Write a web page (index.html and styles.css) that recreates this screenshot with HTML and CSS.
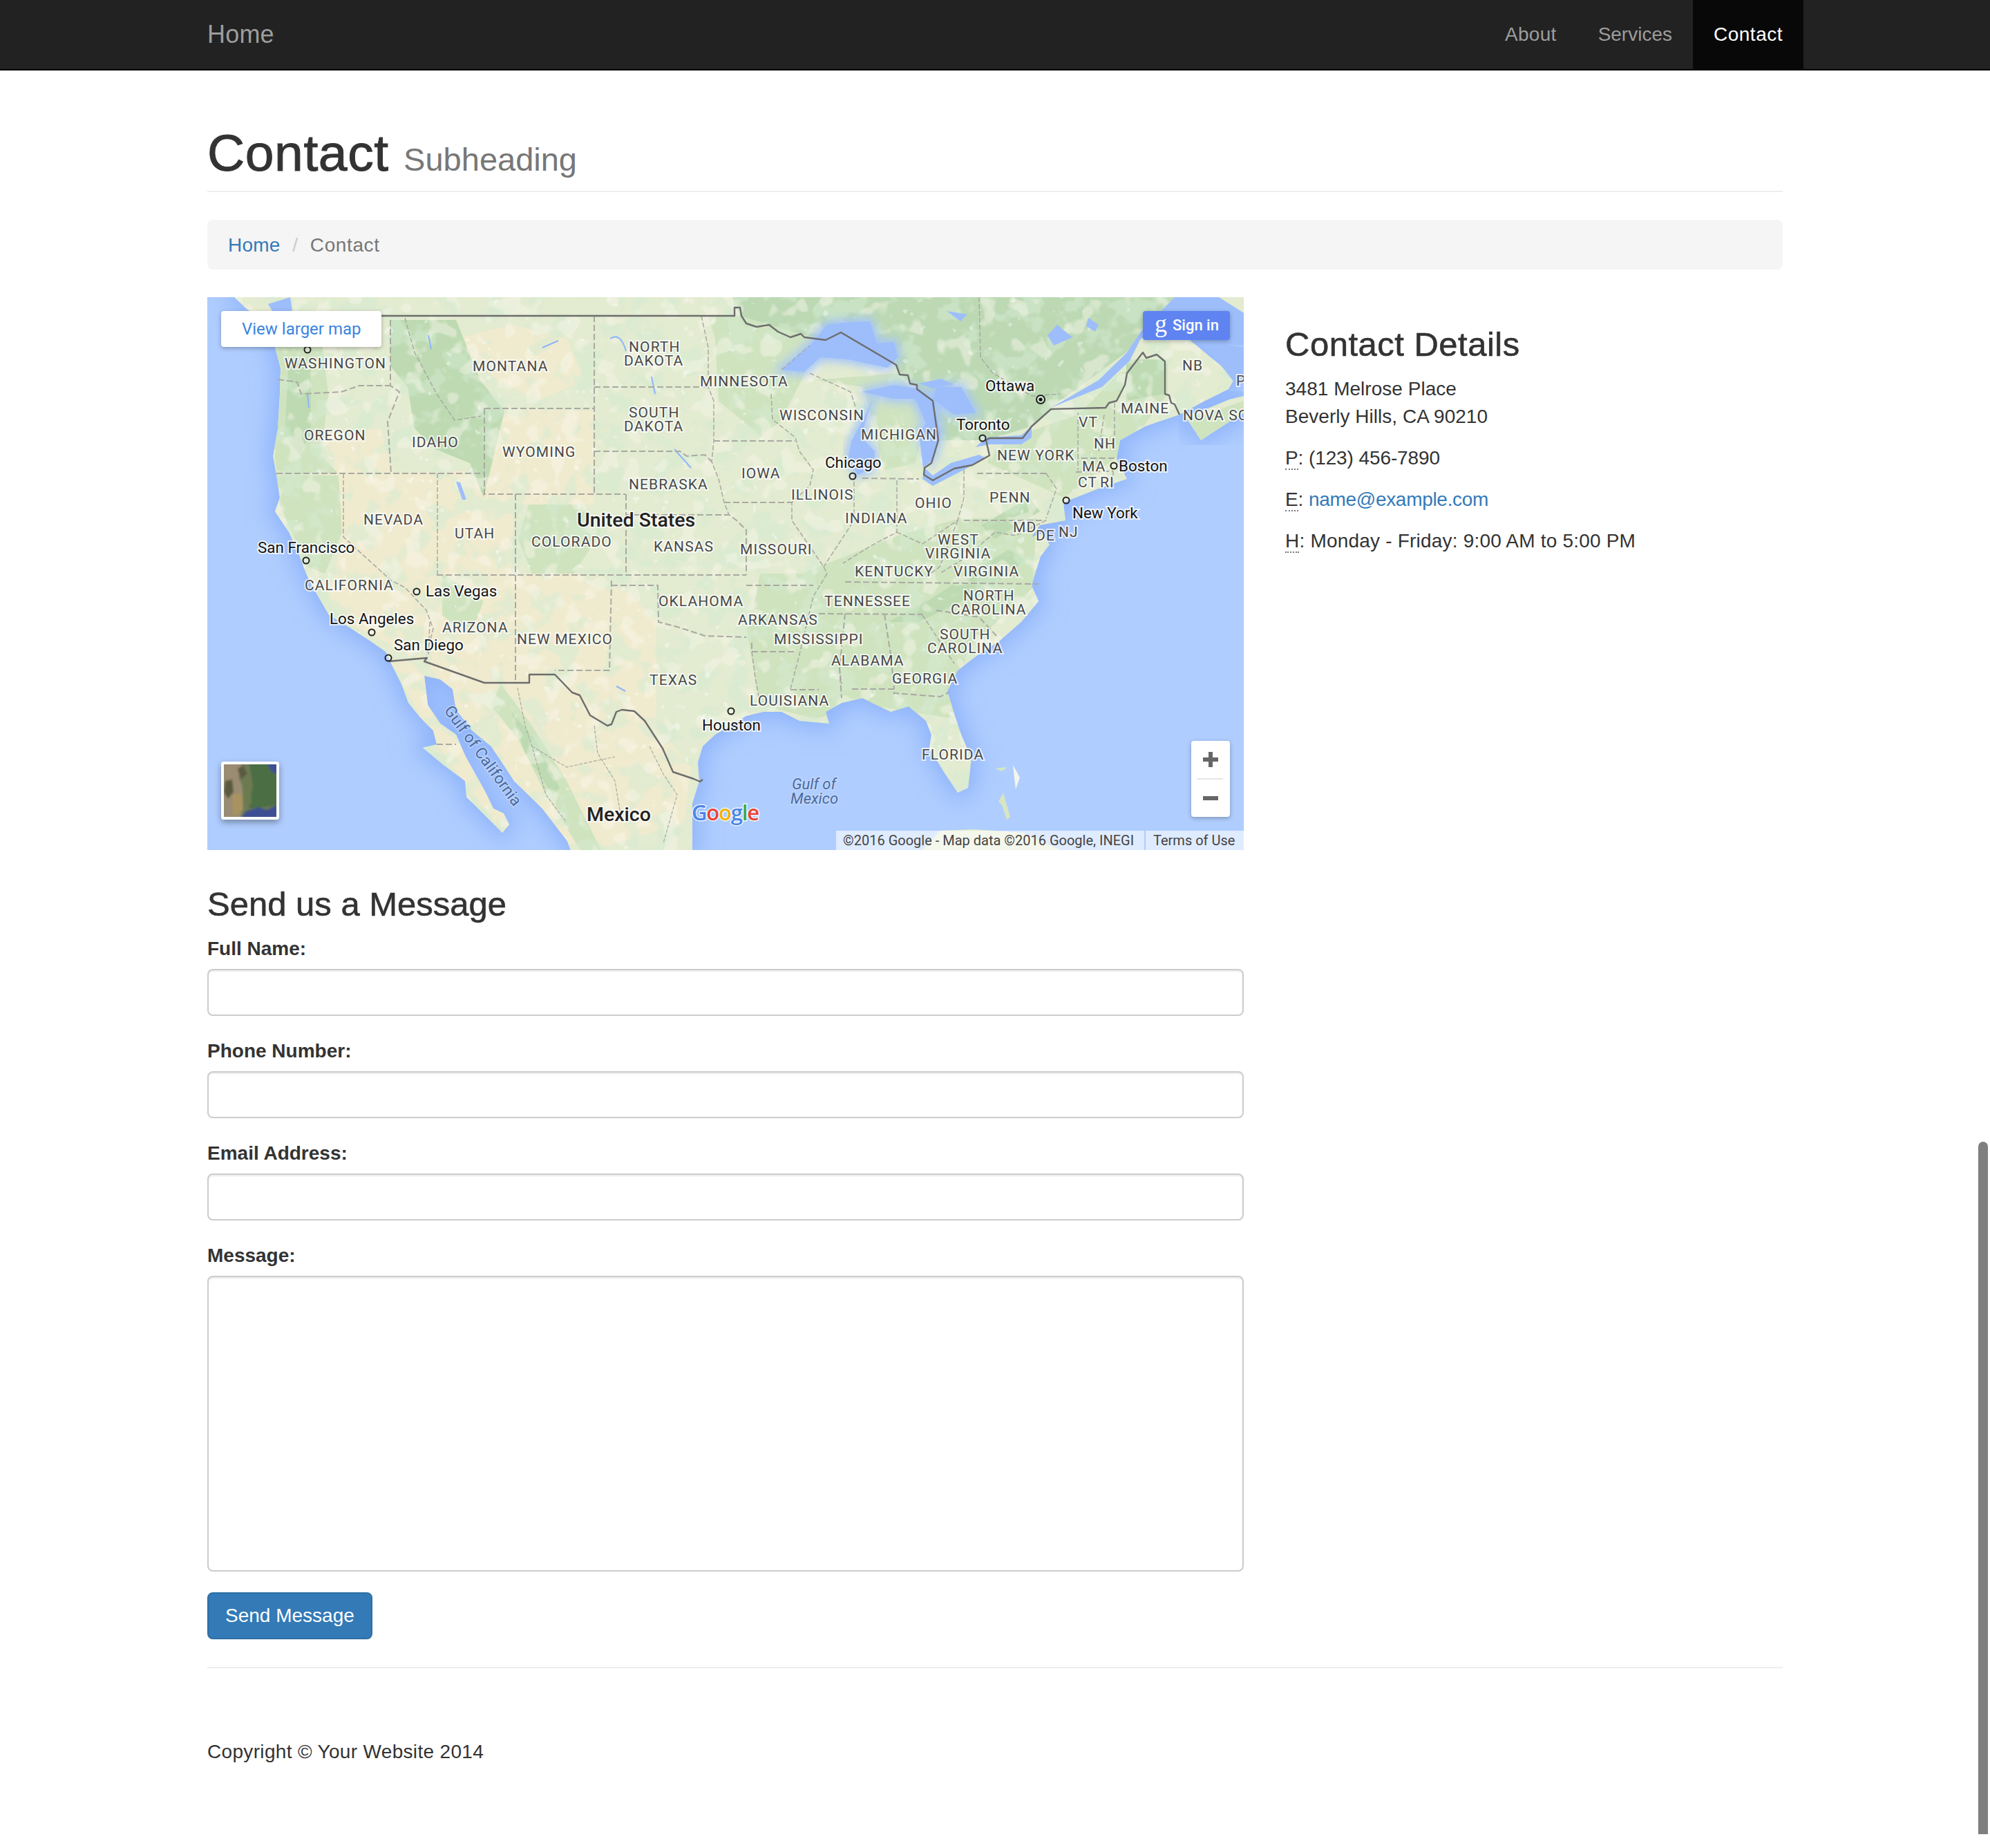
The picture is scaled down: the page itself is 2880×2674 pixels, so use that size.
FILE: index.html
```html
<!DOCTYPE html>
<html lang="en">
<head>
<meta charset="utf-8">
<title>Contact</title>
<link rel="stylesheet" href="styles.css">
</head>
<body>
<nav class="navbar">
  <div class="container navbar-inner">
    <a class="brand" href="#">Home</a>
    <ul class="nav-links">
      <li><a href="#">About</a></li>
      <li><a href="#">Services</a></li>
      <li class="active"><a href="#">Contact</a></li>
    </ul>
  </div>
</nav>

<main class="container">
  <header class="page-header">
    <h1>Contact <small>Subheading</small></h1>
  </header>
  <ol class="breadcrumb">
    <li class="crumb-link"><a href="#">Home</a></li>
    <li class="crumb-active">Contact</li>
  </ol>

  <div class="row">
    <div class="col-main">
      <div class="map">
        <svg class="map-canvas" viewBox="0 0 1500 800" width="1500" height="800" xmlns="http://www.w3.org/2000/svg">
          <defs>
            <filter id="coastBlur" x="-10%" y="-10%" width="120%" height="120%"><feGaussianBlur stdDeviation="16"/></filter>
            <filter id="lakeBlur" x="-20%" y="-20%" width="140%" height="140%"><feGaussianBlur stdDeviation="7"/></filter>
            <filter id="mottleGreen" x="0" y="0" width="100%" height="100%">
              <feTurbulence type="fractalNoise" baseFrequency="0.028" numOctaves="3" seed="11"/>
              <feColorMatrix type="matrix" values="0 0 0 0 0.66  0 0 0 0 0.83  0 0 0 0 0.64  9 0 0 0 -4.7"/>
            </filter>
            <filter id="mottleCream" x="0" y="0" width="100%" height="100%">
              <feTurbulence type="fractalNoise" baseFrequency="0.035" numOctaves="2" seed="4"/>
              <feColorMatrix type="matrix" values="0 0 0 0 0.95  0 0 0 0 0.93  0 0 0 0 0.82  0 10 0 0 -5.7"/>
            </filter>
            <filter id="mottleWhite" x="0" y="0" width="100%" height="100%">
              <feTurbulence type="fractalNoise" baseFrequency="0.07" numOctaves="2" seed="23"/>
              <feColorMatrix type="matrix" values="0 0 0 0 1  0 0 0 0 1  0 0 0 0 1  0 0 16 0 -11.6"/>
            </filter>
            <clipPath id="landClip"><use href="#landShape"/></clipPath>
            <path id="landShape" d="M39,0 L57,17 L90,40 L98,73 L106,103 L105,140 L102,190 L95,230 L100,257 L105,290 L98,310 L118,340 L133,373 L143,400 L153,420 L176,460 L204,477 L235,497 L258,513 L266,530 L281,560 L291,587 L307,607 L327,627 L332,647 L312,652 L342,677 L373,700 L375,723 L419,767 L427,775 L437,763 L429,747 L414,740 L403,717 L373,663 L360,633 L337,617 L319,590 L314,548 L337,553 L355,567 L360,597 L383,627 L411,650 L429,677 L444,700 L485,740 L521,787 L526,800 L702,800 L702,733 L712,700 L710,673 L717,650 L735,633 L780,606 L805,600 L831,600 L857,613 L900,617 L895,600 L918,587 L948,580 L989,600 L1015,592 L1040,613 L1048,633 L1045,653 L1066,687 L1086,717 L1101,710 L1106,667 L1091,633 L1081,603 L1071,570 L1086,540 L1112,520 L1147,497 L1178,470 L1203,440 L1193,417 L1198,400 L1206,375 L1219,358 L1208,342 L1193,347 L1205,330 L1242,323 L1239,297 L1290,277 L1331,263 L1316,233 L1321,207 L1357,187 L1407,170 L1440,152 L1478,133 L1487,117 L1468,100 L1428,67 L1400,42 L1351,50 L1400,0 Z"/>
          </defs>

          <rect class="sea" width="1500" height="800"/>
          <use href="#landShape" class="coast-glow"/>
          <path class="coast-glow" d="M1415,172 L1438,207 L1464,190 L1500,167 L1500,143 L1479,148 L1443,163 Z"/>
          <use href="#landShape" class="land"/>
          <path class="land" d="M1415,172 L1438,207 L1464,190 L1500,167 L1500,143 L1479,148 L1443,163 Z"/>
          <path class="land" d="M1464,0 L1500,23 L1500,0 Z"/>
          <path class="land" d="M1035,800 L1060,772 L1110,770 L1180,775 L1235,800 Z"/>

          <g clip-path="url(#landClip)">
            <!-- desert and prairie -->
            <path class="cream" d="M170,200 L250,190 L270,255 L400,250 L420,160 L560,165 L560,300 L445,300 L440,400 L585,400 L650,470 L650,620 L700,680 L690,760 L560,800 L526,800 L444,700 L360,597 L320,530 L260,500 L200,470 L175,440 L195,350 L170,280 Z"/>
            <path class="cream" d="M266,530 L332,647 L427,775 L437,763 L400,690 L337,600 L314,548 L290,525 Z"/>
            <path class="cream" d="M360,60 L440,40 L520,60 L545,120 L480,150 L420,120 Z"/>
            <!-- forest -->
            <path class="green" d="M90,40 L165,60 L175,140 L165,230 L190,255 L100,257 L96,200 L106,103 Z"/>
            <path class="green" d="M100,257 L190,258 L195,340 L170,400 L145,390 L105,300 Z"/>
            <path class="green2" d="M265,33 L360,33 L395,120 L430,165 L400,290 L380,240 L330,220 L300,190 L290,130 L265,100 Z"/>
            <path class="green2" d="M118,90 L150,100 L150,190 L135,230 L112,200 Z"/>
            <path class="green" d="M465,300 L540,300 L570,340 L530,400 L470,400 L450,350 Z"/>
            <path class="green" d="M340,400 L400,440 L380,490 L340,460 Z"/>
            <path class="green" d="M425,560 L470,620 L520,700 L570,800 L540,800 L490,720 L450,640 L410,590 Z"/>
            <path class="green2" d="M440,600 L475,640 L510,710 L500,720 L460,660 Z"/>
            <path class="green" d="M725,27 L900,30 L870,100 L830,180 L800,200 L740,150 L735,60 Z"/>
            <path class="green" d="M860,400 L1000,345 L1090,320 L1200,320 L1195,420 L1100,510 L1080,610 L960,590 L880,610 L800,590 L780,480 Z"/>
            <path class="green" d="M800,400 L880,400 L860,470 L790,450 Z"/>
            <path class="green" d="M1130,215 L1260,170 L1320,110 L1390,90 L1390,140 L1330,220 L1240,290 L1130,240 Z"/>
            <path class="green2" d="M985,470 L1050,435 L1110,395 L1160,365 L1185,380 L1135,420 L1080,445 L1030,470 Z"/>
            <path class="green2" d="M1120,330 L1190,290 L1205,310 L1140,350 Z"/>
            <path class="green2" d="M1330,90 L1385,90 L1385,140 L1330,150 Z"/>
            <path class="green" d="M880,120 L1000,110 L1040,170 L1025,240 L980,250 L950,130 Z"/>
            <path class="dark" d="M760,0 L1400,0 L1330,80 L1221,160 L1193,187 L1127,207 L1060,207 L1050,150 L1027,130 L1002,112 L997,98 L917,51 L895,62 L859,53 L813,40 L773,27 L763,15 Z"/>
            <rect class="mottle-green" width="1500" height="800"/>
            <rect class="mottle-cream" width="1500" height="800"/>
            <rect class="mottle-white" width="1500" height="800"/>
          </g>
          <path class="green" d="M1415,172 L1438,207 L1464,190 L1500,167 L1500,150 L1443,170 Z"/>

          <!-- lakes and rivers -->
          <g class="lakes-glow">
            <path d="M831,105 L872,70 L897,40 L918,37 L959,35 L969,67 L994,65 L999,87 L984,102 L928,90 L887,87 L864,108 Z"/>
            <path d="M964,147 L948,180 L933,207 L928,230 L941,257 L964,247 L966,223 L946,203 L955,170 Z"/>
            <path d="M948,137 L994,127 L1030,133 L1050,150 L1061,197 L1048,237 L1030,197 L1040,183 L1025,147 L994,147 Z M1055,130 L1091,130 L1112,167 L1081,170 L1050,147 Z"/>
          </g>
          <g class="lakes">
            <path d="M831,105 L872,70 L897,40 L918,37 L959,35 L969,67 L994,65 L999,87 L984,102 L928,90 L887,87 L864,108 Z"/>
            <path d="M964,147 L948,180 L933,207 L928,230 L941,257 L964,247 L966,223 L946,203 L955,170 Z"/>
            <path d="M948,137 L994,127 L1030,133 L1050,150 L1061,197 L1048,237 L1036,247 L1030,197 L1040,183 L1025,147 L994,147 Z"/>
            <path d="M1055,130 L1091,130 L1112,167 L1081,170 L1050,147 Z"/>
            <path d="M1038,247 L1035,263 L1050,273 L1081,257 L1127,233 L1117,228 L1076,240 L1050,258 Z"/>
            <path d="M1112,217 L1127,203 L1178,200 L1193,187 L1193,203 L1178,213 L1132,213 Z"/>
            <path d="M1221,160 L1290,120 L1331,80 L1351,50 L1400,0 L1464,0 L1500,23 L1500,70 L1428,67 L1400,42 L1351,60 L1335,92 L1295,130 Z"/>
            <path d="M360,267 L366,268 L375,293 L369,293 Z"/>
            <path d="M88,10 L120,0 L123,20 L100,30 Z"/>
            <path d="M1440,65 L1500,72 L1500,110 L1490,128 L1468,100 Z"/>
            <path d="M1070,20 L1100,25 L1090,35 Z"/>
            <path d="M1030,125 L1062,118 L1080,126 L1050,132 Z"/>
            <path d="M1230,40 L1252,58 L1225,70 L1216,55 Z"/>
            <path d="M1275,30 L1290,40 L1285,50 L1272,42 Z"/>
          </g>
          <g class="rivers">
            <path d="M583,60 Q598,50 606,78"/>
            <path d="M485,73 L508,63"/>
            <path d="M643,115 L648,140"/>
            <path d="M676,220 L700,247"/>
            <path d="M592,563 L605,570"/>
            <path d="M145,140 L147,160"/>
            <path d="M320,55 L324,75"/>
          </g>
          <!-- islands -->
          <path class="island" d="M1140,682 L1158,680 L1150,686 Z"/>
          <path class="island" d="M1145,730 L1152,717 L1162,752 L1157,756 L1150,735 Z"/>
          <path class="islet" d="M1166,677 L1176,695 L1170,712 L1168,696 Z"/>

          <!-- state lines -->
          <g class="state-lines">
            <path d="M100,255 L401,255"/>
            <path d="M102,119 L130,123 L136,140 L194,137 L220,128 L266,128"/>
            <path d="M265,33 L265,128 L278,137 L261,180 L266,255"/>
            <path d="M401,161 L560,161 M560,27 L560,287 M401,161 L401,285 L605,285"/>
            <path d="M560,130 L725,130 M560,223 L684,223 L694,230 L720,228 L730,238"/>
            <path d="M733,208 L851,208 M748,297 L846,297"/>
            <path d="M605,315 L755,315 L766,323 L780,337 L780,402 M606,285 L606,402 M332,402 L780,402"/>
            <path d="M446,285 L446,558 M585,410 L582,540 L503,540 M585,417 L652,417 L653,470 L680,477 L720,490 L780,492"/>
            <path d="M780,417 L877,417 M885,458 L1035,459 M788,500 L788,513 L851,513 M844,568 L885,568"/>
            <path d="M923,458 L915,537 L918,580 M980,459 L989,517 L994,567 M933,567 L994,567 L994,573 L1061,578 L1073,572"/>
            <path d="M923,412 L1203,415 M1055,453 L1117,463 L1142,490"/>
            <path d="M948,262 L1030,263 M1114,255 L1214,255 M1095,323 L1214,323"/>
            <path d="M1265,233 L1316,233 M1257,253 L1311,252"/>
          </g>
          <g class="state-lines-thin">
            <path d="M197,255 L197,347 L266,410 L286,420 L317,453 L327,480 L317,517"/>
            <path d="M333,255 L333,402"/>
            <path d="M286,30 L300,80 L332,140 L358,178 L396,172"/>
            <path d="M715,27 L725,73 L725,130 L733,150 L733,208 L730,238 L740,263 L748,297 L755,315"/>
            <path d="M897,400 L877,433 L857,517 L844,567 M788,513 L793,550 L800,590"/>
            <path d="M816,140 L818,177 L851,203 L857,223 L877,250 L872,273 L846,297 L846,323 L892,390 L897,400"/>
            <path d="M936,257 L936,323 L892,390 M998,265 L998,340 L960,360 L920,385 M998,340 L1035,357 L1086,323 L1095,290 L1095,243"/>
            <path d="M1214,255 L1229,277 L1214,320 M1086,323 L1060,390 L1040,405 M1214,323 L1170,345 L1140,340 L1100,375 L1060,400"/>
            <path d="M1260,167 L1260,250 M1298,170 L1290,223 M1313,153 L1313,223 M1311,252 L1311,270"/>
            <path d="M1035,460 L1081,530 M872,110 L931,137 L940,165"/>
            <path d="M1117,0 L1119,87 L1137,110 L1193,143 L1234,140 M831,105 L872,70"/>
            <path d="M322,470 L320,520"/>
            <path d="M915,537 L918,560"/>
          </g>
          <path class="state-lines" d="M332,647 L360,647"/>
          <g class="mex-lines">
            <path d="M449,565 L460,620 L470,650 L490,720 L520,760"/>
            <path d="M560,620 L565,660 L590,700 L600,760"/>
            <path d="M640,650 L660,690 L680,720 L660,790"/>
            <path d="M470,650 L520,680 L590,665"/>
          </g>

          <!-- borders -->
          <g class="borders">
            <path d="M252,27 L763,27 L763,15 L771,15 L773,27 L780,38 L795,43 L813,40 L826,50 L844,58 L859,53 L864,58 L895,62 L917,51 L997,98 L1002,112 L1014,113 L1017,125 L1027,127 L1027,133 L1050,150 L1058,207 L1048,240 L1038,247 L1037,257 L1050,265 L1081,248 L1107,243 L1132,229 L1127,207 L1132,204 L1180,204 L1193,187 L1221,162 L1300,160 L1305,153 L1316,150 L1328,127 L1331,110 L1354,80 L1359,88 L1374,83 L1386,93 L1386,140 L1392,142 L1395,153 L1400,155 L1407,170"/>
            <path d="M262,527 L318,522 L314,527 L401,558 L466,558 L466,546 L503,546 L528,572 L539,576 L554,605 L579,620 L585,618 L592,600 L600,597 L618,599 L633,613 L659,653 L674,687 L704,697 L713,701 L717,698"/>
          </g>

          <!-- state labels -->
          <g class="st">
            <text x="112" y="103">WASHINGTON</text>
            <text x="384" y="107">MONTANA</text>
            <text x="610" y="79">NORTH</text>
            <text x="603" y="99">DAKOTA</text>
            <text x="713" y="129">MINNESOTA</text>
            <text x="140" y="207">OREGON</text>
            <text x="296" y="217">IDAHO</text>
            <text x="427" y="231">WYOMING</text>
            <text x="610" y="174">SOUTH</text>
            <text x="603" y="194">DAKOTA</text>
            <text x="610" y="278">NEBRASKA</text>
            <text x="773" y="262">IOWA</text>
            <text x="226" y="329">NEVADA</text>
            <text x="358" y="349">UTAH</text>
            <text x="469" y="361">COLORADO</text>
            <text x="646" y="368">KANSAS</text>
            <text x="771" y="372">MISSOURI</text>
            <text x="828" y="178">WISCONSIN</text>
            <text x="946" y="206">MICHIGAN</text>
            <text x="1143" y="236">NEW YORK</text>
            <text x="1261" y="188">VT</text>
            <text x="1322" y="168">MAINE</text>
            <text x="1411" y="106">NB</text>
            <text x="1412" y="178">NOVA SCOTIA</text>
            <text x="1489" y="128">PE</text>
            <text x="1283" y="219">NH</text>
            <text x="1266" y="252">MA</text>
            <text x="1260" y="275">CT</text>
            <text x="1292" y="275">RI</text>
            <text x="845" y="293">ILLINOIS</text>
            <text x="1024" y="305">OHIO</text>
            <text x="1132" y="297">PENN</text>
            <text x="923" y="327">INDIANA</text>
            <text x="1166" y="340">MD</text>
            <text x="1199" y="352">DE</text>
            <text x="1232" y="347">NJ</text>
            <text x="1057" y="358">WEST</text>
            <text x="1039" y="378">VIRGINIA</text>
            <text x="937" y="404">KENTUCKY</text>
            <text x="1080" y="404">VIRGINIA</text>
            <text x="141" y="424">CALIFORNIA</text>
            <text x="340" y="485">ARIZONA</text>
            <text x="448" y="502">NEW MEXICO</text>
            <text x="653" y="447">OKLAHOMA</text>
            <text x="640" y="561">TEXAS</text>
            <text x="768" y="474">ARKANSAS</text>
            <text x="893" y="447">TENNESSEE</text>
            <text x="1094" y="439">NORTH</text>
            <text x="1076" y="459">CAROLINA</text>
            <text x="820" y="502">MISSISSIPPI</text>
            <text x="1060" y="495">SOUTH</text>
            <text x="1042" y="515">CAROLINA</text>
            <text x="903" y="533">ALABAMA</text>
            <text x="991" y="559">GEORGIA</text>
            <text x="785" y="591">LOUISIANA</text>
            <text x="1034" y="669">FLORIDA</text>
          </g>

          <!-- city markers -->
          <g class="pin">
            <circle cx="145" cy="76" r="4.5"/>
            <circle cx="143" cy="381" r="4.5"/>
            <circle cx="303" cy="426" r="4.5"/>
            <circle cx="238" cy="485" r="4.5"/>
            <circle cx="262" cy="522" r="4.5"/>
            <circle cx="758" cy="599" r="4.5"/>
            <circle cx="934" cy="259" r="4.5"/>
            <circle cx="1122" cy="204" r="4.5"/>
            <circle cx="1312" cy="244" r="4.5"/>
            <circle cx="1243" cy="294" r="4.5"/>
            <circle cx="1206" cy="148" r="6"/>
          </g>
          <circle class="capital" cx="1206" cy="148" r="2.6"/>

          <!-- city labels -->
          <g class="ct">
            <text x="73" y="370">San Francisco</text>
            <text x="316" y="433">Las Vegas</text>
            <text x="177" y="473">Los Angeles</text>
            <text x="270" y="511">San Diego</text>
            <text x="716" y="627">Houston</text>
            <text x="894" y="247">Chicago</text>
            <text x="1084" y="192">Toronto</text>
            <text x="1126" y="136">Ottawa</text>
            <text x="1319" y="252">Boston</text>
            <text x="1252" y="320">New York</text>
          </g>
          <g class="ctry">
            <text x="535" y="332">United States</text>
            <text x="549" y="758">Mexico</text>
          </g>
          <g class="sea-label">
            <text class="gulf-cal" transform="translate(342,598) rotate(54)">Gulf of California</text>
            <text class="gulf" x="846" y="712">Gulf of</text>
            <text class="gulf" x="844" y="733">Mexico</text>
          </g>
          <text class="google" x="701" y="757"><tspan class="g-blue">G</tspan><tspan class="g-red">o</tspan><tspan class="g-yellow">o</tspan><tspan class="g-blue">g</tspan><tspan class="g-green">l</tspan><tspan class="g-red">e</tspan></text>
        </svg>

        <a class="map-larger" href="#">View larger map</a>
        <a class="map-signin" href="#"><span class="g-mark">g</span><span>Sign in</span></a>
        <div class="map-zoom">
          <button class="zoom-btn" type="button" aria-label="Zoom in"><svg width="22" height="22" viewBox="0 0 22 22"><path class="zoom-glyph" d="M8,0 H14 V8 H22 V14 H14 V22 H8 V14 H0 V8 H8 Z"/></svg></button>
          <span class="zoom-div"></span>
          <button class="zoom-btn" type="button" aria-label="Zoom out"><svg width="22" height="6" viewBox="0 0 22 6"><rect class="zoom-glyph" width="22" height="6"/></svg></button>
        </div>
        <div class="map-thumb">
          <svg width="76" height="76" viewBox="0 0 76 76" preserveAspectRatio="none" xmlns="http://www.w3.org/2000/svg">
            <defs><filter id="thumbBlur"><feGaussianBlur stdDeviation="1.6"/></filter></defs>
            <rect class="t-earth" width="76" height="76"/>
            <g filter="url(#thumbBlur)">
              <path class="t-tan" d="M-4,-4 H26 L22,20 L30,40 L24,80 H-4 Z"/>
              <path class="t-brown" d="M2,24 L12,22 L14,40 L6,50 L0,40 Z"/>
              <path class="t-brown" d="M20,6 L28,2 L34,14 L24,22 Z"/>
              <path class="t-green" d="M36,-4 H80 V60 L36,64 L42,30 Z"/>
              <path class="t-gold" d="M12,44 L26,42 L28,66 L14,76 Z"/>
              <path class="t-mid" d="M26,20 L38,18 L40,56 L28,62 Z"/>
              <path class="t-blue" d="M26,76 L32,68 L50,62 L62,66 L80,58 V80 H26 Z"/>
              <path class="t-blue" d="M62,-4 H80 V16 L68,10 Z"/>
            </g>
          </svg>
        </div>
        <div class="map-attr">
          <span class="attr-box attr-main">©2016 Google - Map data ©2016 Google, INEGI</span>
          <span class="attr-box attr-terms">Terms of Use</span>
        </div>
      </div>

      <h3 class="form-title">Send us a Message</h3>
      <form class="contact-form">
        <div class="control">
          <label for="name">Full Name:</label>
          <input id="name" type="text">
        </div>
        <div class="control">
          <label for="phone">Phone Number:</label>
          <input id="phone" type="tel">
        </div>
        <div class="control">
          <label for="email">Email Address:</label>
          <input id="email" type="email">
        </div>
        <div class="control">
          <label for="message">Message:</label>
          <textarea id="message" rows="10"></textarea>
        </div>
        <button class="btn-primary" type="submit">Send Message</button>
      </form>
    </div>

    <aside class="col-side">
      <h3>Contact Details</h3>
      <p class="addr">3481 Melrose Place<br>Beverly Hills, CA 90210</p>
      <p class="tel"><abbr title="Phone">P</abbr>: (123) 456-7890</p>
      <p class="mail"><abbr title="Email">E</abbr>: <a href="#">name@example.com</a></p>
      <p><abbr title="Hours">H</abbr>: Monday - Friday: 9:00 AM to 5:00 PM</p>
    </aside>
  </div>

  <hr class="rule">
  <footer class="footer">
    <p>Copyright © Your Website 2014</p>
  </footer>
</main>
<div class="scroll-thumb"></div>
</body>
</html>
```

FILE: styles.css
```css
* { box-sizing: border-box; }
html, body { margin: 0; padding: 0; }
body {
  position: relative;
  background: #fff;
  color: #333;
  font: 28px/40px "Liberation Sans", Arial, sans-serif;
  letter-spacing: 0.2px;
  overflow-x: hidden;
}
a { color: #337ab7; text-decoration: none; }
.container { width: 2340px; margin: 0 auto; padding: 0 30px; }

/* navbar */
.navbar { height: 102px; background: #222; border-bottom: 2px solid #080808; }
.navbar-inner { display: flex; justify-content: space-between; height: 100px; }
.brand { font-size: 36px; line-height: 100px; color: #9d9d9d; letter-spacing: 0.2px; }
.nav-links { display: flex; list-style: none; margin: 0 -30px 0 0; padding: 0; }
.nav-links a { display: block; padding: 30px; line-height: 40px; color: #9d9d9d; letter-spacing: 0; }
.nav-links li:first-child a { letter-spacing: 0.3px; }
.nav-links .active a { background: #080808; color: #fff; letter-spacing: 0.5px; }

/* heading */
.page-header { margin-top: 80px; padding-bottom: 18px; border-bottom: 2px solid #eee; margin-bottom: 40px; height: 96px; }
.page-header h1 { margin: 0; font-size: 75px; line-height: 79px; font-weight: 400; letter-spacing: 0.6px; -webkit-text-stroke: 1px #333; }
.page-header small { font-size: 47px; color: #777; letter-spacing: 0; -webkit-text-stroke: 0; }

.breadcrumb { list-style: none; margin: 0 0 40px; padding: 17px 30px 15px; background: #f5f5f5; border-radius: 8px; height: 72px; letter-spacing: 0; }
.breadcrumb li { display: inline-block; }
.breadcrumb li + li::before { content: "/\00a0"; padding: 0 10px; color: #ccc; letter-spacing: 0; }
.crumb-link { letter-spacing: 0.2px; }
.crumb-active { color: #777; letter-spacing: 0.6px; }

/* columns */
.row { display: flex; gap: 60px; align-items: flex-start; }
.col-main { width: 1500px; flex: none; }
.col-side { flex: 1; }
.col-side h3, .form-title { font-size: 49px; line-height: 52.8px; font-weight: 400; -webkit-text-stroke: 0.6px #333; }
.col-side h3 { margin: 42px 0 18px; letter-spacing: 0.5px; }
.col-side p { margin: 0 0 20px; }
.addr { letter-spacing: 0.02px; }
.tel { letter-spacing: -0.1px; }
.mail { letter-spacing: -0.1px; }
.mail a { letter-spacing: -0.3px; }
abbr { border-bottom: 2px dotted #777; text-decoration: none; }

/* map */
.map { position: relative; width: 1500px; height: 800px; overflow: hidden; background: #aecbfd; }
.map-canvas { display: block; }
.sea { fill: #afcdfe; }
.coast-glow { fill: #8fb4fb; stroke: #8fb4fb; stroke-width: 20; filter: url(#coastBlur); }
.land { fill: #e3ebd0; }
.cream { fill: #f0ebcf; }
.green { fill: #cfe3bf; }
.green2 { fill: #bddab2; }
.dark { fill: #bcd9b4; }
.mottle-green { filter: url(#mottleGreen); opacity: 0.5; }
.mottle-cream { filter: url(#mottleCream); opacity: 0.45; }
.mottle-white { filter: url(#mottleWhite); opacity: 0.4; }
.lakes path { fill: #9dbefb; }
.lakes-glow path { fill: #a4c4fb; stroke: #a4c4fb; stroke-width: 10; filter: url(#lakeBlur); }
.rivers path { fill: none; stroke: #8fb4fb; stroke-width: 2; }
.island { fill: #d6e6c2; }
.islet { fill: #f4f6ee; }
.state-lines, .state-lines path { fill: none; stroke: #a9a9a2; stroke-width: 2; stroke-dasharray: 9 4; }
.state-lines-thin path { fill: none; stroke: #a9a9a2; stroke-width: 1.5; stroke-dasharray: 7 3; }
.mex-lines path { fill: none; stroke: #a9a9a2; stroke-width: 1.2; stroke-dasharray: 5 2; }
.borders path { fill: none; stroke: #6d6d6d; stroke-width: 2.4; stroke-linejoin: round; }
.st text {
  font: 400 21px Roboto, sans-serif;
  letter-spacing: 1.1px;
  fill: #494949;
  stroke: rgba(255,255,255,.72);
  stroke-width: 4px;
  paint-order: stroke;
}
.ct text {
  font: 400 22.4px Roboto, sans-serif;
  letter-spacing: 0;
  fill: #141414;
  stroke: rgba(255,255,255,.75);
  stroke-width: 4px;
  paint-order: stroke;
}
.ctry text {
  font: 500 28.5px Roboto, sans-serif;
  letter-spacing: 0;
  fill: #222;
  stroke: rgba(255,255,255,.7);
  stroke-width: 4px;
  paint-order: stroke;
}
.sea-label text {
  font: 400 23px Roboto, sans-serif;
  letter-spacing: 0;
  fill: #4c6a9d;
  stroke: rgba(200,220,255,.7);
  stroke-width: 3px;
  paint-order: stroke;
}
.sea-label .gulf { font-style: italic; font-size: 22px; }
.pin circle { fill: #fff; fill-opacity: .35; stroke: #222; stroke-width: 2; }
.capital { fill: #111; }
.google { font: 600 31px "Open Sans", sans-serif; letter-spacing: -1.2px; stroke: rgba(255,255,255,.8); stroke-width: 3px; paint-order: stroke; }
.g-blue { fill: #4a86e8; }
.g-red { fill: #ea4335; }
.g-yellow { fill: #f4b400; }
.g-green { fill: #34a853; }

.map-larger {
  position: absolute; left: 20px; top: 20px; width: 232px; height: 52px;
  padding: 6px 0 0 30px;
  background: #fff; border-radius: 4px; box-shadow: 0 2px 6px rgba(0,0,0,.28);
  font: 400 24px/40px Roboto, sans-serif; letter-spacing: 0; color: #3a84df;
}
.map-signin {
  position: absolute; left: 1354px; top: 20px; width: 126px; height: 42px;
  display: flex; align-items: center; gap: 8px; padding-left: 17px;
  background: #5f84f1; border-radius: 4px; box-shadow: 0 2px 6px rgba(0,0,0,.25);
  font: 500 22px/42px Roboto, sans-serif; letter-spacing: 0; color: #fff;
}
.g-mark { font: 400 36px/34px "Liberation Serif", serif; margin-top: -6px; }
.map-zoom {
  position: absolute; left: 1424px; top: 642px; width: 56px; height: 110px;
  display: flex; flex-direction: column; align-items: center;
  background: #fff; border-radius: 4px; box-shadow: 0 2px 6px rgba(0,0,0,.28);
}
.zoom-btn { flex: 1; width: 100%; padding: 0; border: 0; background: none; display: flex; align-items: center; justify-content: center; }
.zoom-div { flex: none; width: 38px; height: 2px; background: #e6e6e6; margin-left: -2px; }
.zoom-glyph { fill: #666; }
.map-thumb {
  position: absolute; left: 20px; top: 672px; width: 84px; height: 84px;
  border: 4px solid #fff; border-radius: 4px; box-shadow: 0 4px 10px rgba(0,0,0,.35); overflow: hidden;
  line-height: 0;
}
.t-earth { fill: #6f7a55; }
.t-tan { fill: #9a8c72; }
.t-brown { fill: #5a5a40; }
.t-green { fill: #4c6e45; }
.t-gold { fill: #a89360; }
.t-mid { fill: #6c7a50; }
.t-blue { fill: #3d4f92; }
.map-attr { position: absolute; right: 0; bottom: 0; display: flex; gap: 2px; height: 28px; }
.attr-box { background: rgba(255,255,255,.6); padding: 0 10px; font: 400 20px/28px Roboto, sans-serif; letter-spacing: 0; color: #444; white-space: nowrap; }
.attr-main { width: 446px; }
.attr-terms { width: 142px; padding-left: 11px; }

/* form */
.form-title { margin: 52px 0 17px; letter-spacing: 0; }
.control { margin-bottom: 30px; }
.control label { display: block; padding-top: 1px; margin-bottom: 9px; font-weight: 700; letter-spacing: 0; }
.control input, .control textarea {
  display: block; width: 100%;
  padding: 12px 24px; border: 2px solid #ccc; border-radius: 8px; background: #fff;
  box-shadow: inset 0 2px 2px rgba(0,0,0,.075);
  font: inherit; color: #555; outline: 0; resize: none;
}
.control input { height: 68px; }
.control textarea { height: 428px; }
.btn-primary {
  display: block; height: 68px; padding: 12px 24px; border: 2px solid #2e6da4; border-radius: 8px;
  background: #337ab7; color: #fff; font: 28px/40px "Liberation Sans", Arial, sans-serif;
}

/* footer */
.rule { height: 2px; margin: 40px 0 0; border: 0; background: #eee; }
.footer { margin: 100px 0; letter-spacing: 0.33px; }
.footer p { margin: 0 0 20px; padding-top: 1px; height: 40px; }

.scroll-thumb { position: absolute; top: 1652px; left: 2863px; width: 14px; height: 1018px; border-radius: 7px; background: #7f7f7f; }
```
